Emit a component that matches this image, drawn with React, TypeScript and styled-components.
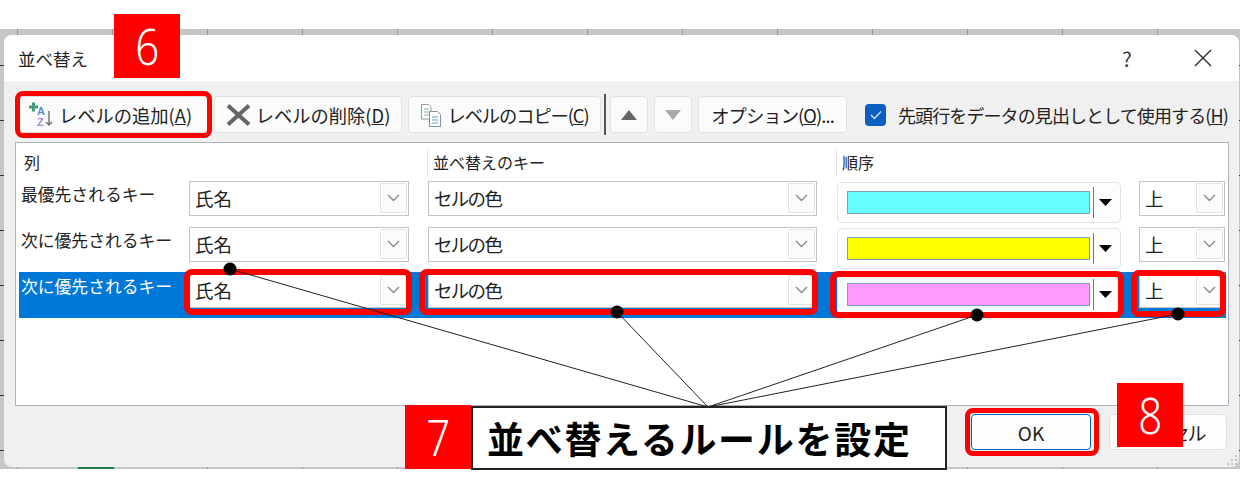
import styled, { createGlobalStyle } from "styled-components";

const GlobalStyle = createGlobalStyle`
  html, body { margin: 0; padding: 0; background: #fff; }
  body { font-family: "Noto Sans CJK JP", "Noto Sans", sans-serif; color: #222; }
`;

const Page = styled.div`
  position: relative;
  width: 1240px;
  height: 500px;
  padding-top: 29px;
  box-sizing: border-box;
  overflow: hidden;
`;

const Sheet = styled.div`
  height: 440px;
  padding: 6px 1px 2px 4px;
  box-sizing: border-box;
  background-color: #c6c6c6;
  background-image: linear-gradient(90deg, #969696 1px, transparent 1px), linear-gradient(#333 1px, transparent 1px);
  background-size: 95px 100%, 100% 55px;
  background-position: 17px 0, 0 36px;
`;

const Dialog = styled.div`
  position: relative;
  height: 100%;
  display: flex;
  flex-direction: column;
  background: #f0f0f0;
  border-radius: 8px;
  overflow: hidden;
`;

const TitleBar = styled.div`
  flex: none;
  height: 46px;
  display: flex;
  align-items: center;
  padding: 0 27px 0 14px;
  background: #fff;
  font-size: 17.5px;
`;

const Title = styled.div`
  flex: 1;
`;

const TitleAction = styled.div`
  width: 134px;
  display: flex;
  justify-content: center;
  font-size: 20px;
  color: #333;
`;

const Toolbar = styled.div`
  flex: none;
  height: 61px;
  display: flex;
  align-items: flex-start;
  padding: 15px 0 0 15px;
  box-sizing: border-box;
`;

const Anchor = styled.div<{ $ml?: number }>`
  position: relative;
  margin-left: ${(p) => p.$ml ?? 0}px;
  display: flex;
`;

const ToolButton = styled.div<{ $w: number; $ls?: number; $shift?: number }>`
  width: ${(p) => p.$w}px;
  height: 37px;
  display: flex;
  align-items: center;
  justify-content: center;
  gap: 5px;
  padding-right: ${(p) => p.$shift ?? 0}px;
  box-sizing: border-box;
  background: #fbfbfb;
  border: 1px solid #e0e0e0;
  border-radius: 4px;
  font-size: 18.3px;
  white-space: nowrap;
  letter-spacing: ${(p) => p.$ls ?? 0}px;
`;

const Divider = styled.div`
  width: 2px;
  height: 41px;
  margin: -2px 4px 0 3px;
  background: #555;
`;

const CheckLabel = styled.div`
  margin-left: 18px;
  height: 37px;
  display: flex;
  align-items: center;
  gap: 12px;
  font-size: 18px;
  white-space: nowrap;
  letter-spacing: -0.9px;
`;

const CheckBox = styled.div`
  width: 21px;
  height: 22px;
  display: flex;
  align-items: center;
  justify-content: center;
  background: #0a5fc0;
  border-radius: 4px;
`;

const Grid = styled.div`
  flex: none;
  width: 1214px;
  height: 264px;
  margin-left: 11px;
  box-sizing: border-box;
  background: #fff;
  border: 1px solid #a9b2bd;
  padding: 7px 2px 0 3px;
`;

const HeaderRow = styled.div`
  display: grid;
  grid-template-columns: 408px 409px 1fr;
  height: 26px;
  font-size: 16px;
  line-height: 24px;
  margin-bottom: 4px;
`;

const HeaderCell = styled.div`
  padding-left: 5px;
  border-left: 1px solid #e4e4e4;
  &:first-child { border-left: 0; }
`;

const Row = styled.div<{ $selected?: boolean }>`
  display: grid;
  grid-template-columns: 170px 220px 19px 389px 20px 284px 18px 86px;
  align-items: start;
  height: 46px;
  padding-top: 1px;
  box-sizing: border-box;
  background: ${(p) => (p.$selected ? "#0078d7" : "transparent")};
`;

const RowLabel = styled.div<{ $selected?: boolean }>`
  padding: 1px 0 0 2px;
  font-size: 16.8px;
  line-height: 24px;
  white-space: nowrap;
  color: ${(p) => (p.$selected ? "#fff" : "#222")};
`;

const Cell = styled.div`
  position: relative;
`;

const Select = styled.div`
  height: 35px;
  display: flex;
  align-items: center;
  justify-content: space-between;
  box-sizing: border-box;
  padding: 0 1px 2px 5px;
  background: #fff;
  border: 1px solid #c4c4c4;
  font-size: 18.5px;
`;

const NarrowText = styled.span`
  letter-spacing: -1.7px;
`;

const Caret = styled.div`
  width: 27px;
  height: 30px;
  display: flex;
  align-items: center;
  justify-content: center;
  background: #fcfcfc;
  border: 1px solid #e2e2e2;
  border-radius: 2px;
  box-sizing: border-box;
`;

const ColorSelect = styled.div`
  height: 41px;
  margin-top: 1px;
  display: flex;
  align-items: center;
  box-sizing: border-box;
  padding: 0 8px 0 9px;
  background: #fdfdfd;
  border: 1px solid #e2e2e2;
  border-radius: 5px;
`;

const Swatch = styled.div<{ $color: string }>`
  flex: 1;
  height: 21px;
  background: ${(p) => p.$color};
  border: 1px solid #7f9db9;
`;

const SwatchSplit = styled.div`
  width: 1px;
  height: 31px;
  margin: 0 5px 0 3px;
  background: #777;
`;

const Footer = styled.div`
  flex: 1;
  display: flex;
  justify-content: flex-end;
  align-items: flex-start;
  gap: 18px;
  padding: 8px 12px 0 0;
`;

const FooterButton = styled.div<{ $focused?: boolean }>`
  width: ${(p) => (p.$focused ? 120 : 118)}px;
  height: 36px;
  display: flex;
  align-items: center;
  justify-content: center;
  box-sizing: border-box;
  padding-right: ${(p) => (p.$focused ? 0 : 12)}px;
  background: #fdfdfd;
  border: 1px solid ${(p) => (p.$focused ? "#0067c0" : "#e0e0e0")};
  border-radius: 4px;
  font-size: 19px;
  letter-spacing: ${(p) => (p.$focused ? 0 : -2)}px;
`;

const Grip = styled.svg`
  position: absolute;
  right: 1px;
  bottom: 1px;
`;

const Highlight = styled.div<{ $inset: string; $w?: number }>`
  position: absolute;
  inset: ${(p) => p.$inset};
  border: ${(p) => p.$w ?? 6}px solid #f00;
  border-radius: 8px;
  pointer-events: none;
`;

const StepBadge = styled.div<{ $x: number; $y: number }>`
  position: absolute;
  left: ${(p) => p.$x}px;
  top: ${(p) => p.$y}px;
  width: 66px;
  height: 64px;
  display: flex;
  align-items: center;
  justify-content: center;
  background: #f00;
  color: #fff;
  font-family: "Noto Sans", sans-serif;
  font-size: 50px;
  font-weight: 300;
`;

const Digit = styled.span`
  display: inline-block;
  transform: scaleX(0.84);
`;

const Callout = styled.div`
  position: absolute;
  left: 471px;
  top: 406px;
  width: 476px;
  height: 64px;
  box-sizing: border-box;
  display: flex;
  align-items: center;
  padding-left: 14px;
  background: #fff;
  border: 2px solid #222;
  color: #000;
  font-size: 37px;
  font-weight: 700;
  letter-spacing: 1.7px;
  white-space: nowrap;
`;

const SheetText = styled.div`
  position: absolute;
  left: 78px;
  top: 467px;
  width: 36px;
  height: 2px;
  background: #1f7a4c;
`;

const Leaders = styled.svg`
  position: absolute;
  left: 0;
  top: 0;
`;

const ChevronDown = () => (
  <svg width="13" height="8" viewBox="0 0 13 8">
    <path d="M1 1l5.5 5.5L12 1" fill="none" stroke="#888" strokeWidth="1.3" />
  </svg>
);

const AddIcon = () => (
  <svg width="26" height="25" viewBox="0 0 26 25">
    <path d="M1 5h9M5.5 0.5v9" stroke="#3f9d7a" strokeWidth="3" />
    <text x="9" y="13" fontSize="11" fontWeight="700" fontFamily="Liberation Sans" fill="#5b8fd0">A</text>
    <text x="9" y="24" fontSize="11" fontWeight="700" fontFamily="Liberation Sans" fill="#a78bd0">Z</text>
    <path d="M21 9v14M18 20l3 3 3-3" fill="none" stroke="#777" strokeWidth="1.5" />
  </svg>
);

const DeleteIcon = () => (
  <svg width="25" height="22" viewBox="0 0 25 22">
    <path d="M2 1.5l21 19M23 1.5l-21 19" stroke="#666" strokeWidth="4" />
  </svg>
);

const CopyIcon = () => (
  <svg width="22" height="24" viewBox="0 0 22 24">
    <path d="M1.5 1.5h7l2.5 2.5v12h-9.500z" fill="#fff" stroke="#999" />
    <path d="M4 6h5M4 9h5M4 12h5" stroke="#8aa" />
    <path d="M9.500 8.500h8l3 3v12h-11z" fill="#fff" stroke="#7f8fa5" />
    <path d="M12 14h6M12 17h6M12 20h6" stroke="#6f9bd0" />
  </svg>
);

const Triangle = ({ up, color, small }: { up?: boolean; color: string; small?: boolean }) => (
  <svg width={small ? 13 : 16} height={small ? 7 : 10} viewBox="0 0 16 10" preserveAspectRatio="none">
    <path d={up ? "M8 0l8 10H0z" : "M0 0h16L8 10z"} fill={color} />
  </svg>
);

const rows = [
  { label: "最優先されるキー", color: "#66ffff" },
  { label: "次に優先されるキー", color: "#ffff00" },
  { label: "次に優先されるキー", color: "#ff99ff", selected: true },
];

const dots = [
  [230, 269],
  [617, 312],
  [977, 315],
  [1178, 314],
];

export default function App() {
  return (
    <Page>
      <GlobalStyle />
      <Sheet>
        <Dialog>
          <TitleBar>
            <Title>並べ替え</Title>
            <TitleAction>?</TitleAction>
            <svg width="18" height="18" viewBox="0 0 18 18">
              <path d="M1 1l16 16M17 1L1 17" stroke="#333" strokeWidth="1.5" />
            </svg>
          </TitleBar>
          <Toolbar>
            <Anchor>
              <ToolButton $w={190} $shift={8}>
                <AddIcon />
                <span>レベルの追加(<u>A</u>)</span>
              </ToolButton>
              <Highlight $inset="-5px -3px -5px -4px" $w={5} />
            </Anchor>
            <Anchor $ml={5}>
              <ToolButton $w={188}>
                <DeleteIcon />
                <span>レベルの削除(<u>D</u>)</span>
              </ToolButton>
            </Anchor>
            <Anchor $ml={6}>
              <ToolButton $w={193} $ls={-1.1}>
                <CopyIcon />
                <span>レベルのコピー(<u>C</u>)</span>
              </ToolButton>
            </Anchor>
            <Divider />
            <ToolButton $w={38}>
              <Triangle up color="#666" />
            </ToolButton>
            <Anchor $ml={6}>
              <ToolButton $w={38}>
                <Triangle color="#aaa" />
              </ToolButton>
            </Anchor>
            <Anchor $ml={6}>
              <ToolButton $w={149} $ls={-0.9}>
                <span>オプション(<u>O</u>)...</span>
              </ToolButton>
            </Anchor>
            <CheckLabel>
              <CheckBox>
                <svg width="12" height="10" viewBox="0 0 12 10">
                  <path d="M1 5l3.500 3.500L11 1.500" fill="none" stroke="#cfe2f7" strokeWidth="1.4" />
                </svg>
              </CheckBox>
              <span>先頭行をデータの見出しとして使用する(<u>H</u>)</span>
            </CheckLabel>
          </Toolbar>
          <Grid>
            <HeaderRow>
              <HeaderCell>列</HeaderCell>
              <HeaderCell>並べ替えのキー</HeaderCell>
              <HeaderCell>順序</HeaderCell>
            </HeaderRow>
            {rows.map((row, i) => (
              <Row key={i} $selected={row.selected}>
                <RowLabel $selected={row.selected}>{row.label}</RowLabel>
                <Cell>
                  <Select>
                    氏名
                    <Caret><ChevronDown /></Caret>
                  </Select>
                  {row.selected && <Highlight $inset="-4px -3px -7px -5px" />}
                </Cell>
                <span />
                <Cell>
                  <Select>
                    <NarrowText>セルの色</NarrowText>
                    <Caret><ChevronDown /></Caret>
                  </Select>
                  {row.selected && <Highlight $inset="-4px -1px -7px -9px" />}
                </Cell>
                <span />
                <Cell>
                  <ColorSelect>
                    <Swatch $color={row.color} />
                    <SwatchSplit />
                    <Triangle small color="#000" />
                  </ColorSelect>
                  {row.selected && <Highlight $inset="-2px -3px -3px -7px" />}
                </Cell>
                <span />
                <Cell>
                  <Select>
                    上
                    <Caret><ChevronDown /></Caret>
                  </Select>
                  {row.selected && <Highlight $inset="-3px -1px -9px -8px" />}
                </Cell>
              </Row>
            ))}
          </Grid>
          <Footer>
            <Anchor>
              <FooterButton $focused>OK</FooterButton>
              <Highlight $inset="-6px -8px -6px -6px" $w={5} />
            </Anchor>
            <FooterButton>キャンセル</FooterButton>
          </Footer>
          <Grip width="12" height="12" viewBox="0 0 12 12">
            <path d="M9 1h2v2H9zM5 5h2v2H5zM9 5h2v2H9zM1 9h2v2H1zM5 9h2v2H5zM9 9h2v2H9z" fill="#c4c4c4" />
          </Grip>
        </Dialog>
      </Sheet>
      <SheetText />
      <Leaders width="1240" height="500" viewBox="0 0 1240 500">
        {dots.map(([x, y]) => (
          <g key={x}>
            <line x1={x} y1={y} x2="708" y2="407" stroke="#222" strokeWidth="1" />
            <circle cx={x} cy={y} r="6.5" fill="#000" />
          </g>
        ))}
      </Leaders>
      <StepBadge $x={114} $y={14}><Digit>6</Digit></StepBadge>
      <StepBadge $x={405} $y={405}><Digit>7</Digit></StepBadge>
      <Callout>並べ替えるルールを設定</Callout>
      <StepBadge $x={1117} $y={383}><Digit>8</Digit></StepBadge>
    </Page>
  );
}
